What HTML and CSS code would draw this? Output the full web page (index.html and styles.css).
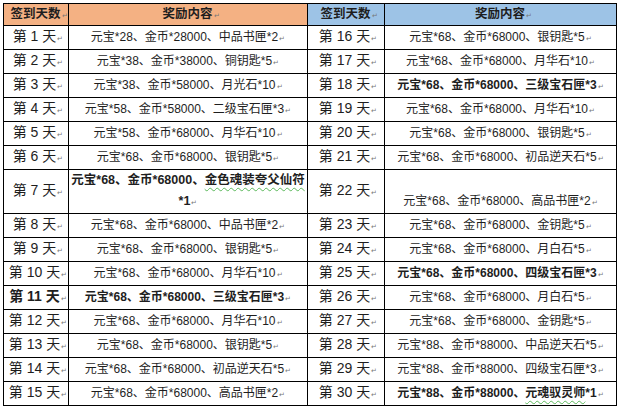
FILE: index.html
```html
<!DOCTYPE html>
<html lang="zh-CN">
<head>
<meta charset="utf-8">
<title>签到奖励</title>
<link rel="stylesheet" href="styles.css">
</head>
<body>
<table class="rewards">
  <colgroup>
    <col class="c-day">
    <col class="c-reward-l">
    <col class="c-day2">
    <col class="c-reward-r">
  </colgroup>
  <tr class="head">
    <th class="h-orange">签到天数<span class="pm">↵</span></th>
    <th class="h-orange">奖励内容<span class="pm">↵</span></th>
    <th class="h-blue">签到天数<span class="pm">↵</span></th>
    <th class="h-blue">奖励内容<span class="pm">↵</span></th>
  </tr>
  <tr>
    <td class="day">第 1 天<span class="pm">↵</span></td>
    <td>元宝*28、金币*28000、中品书匣*2<span class="pm">↵</span></td>
    <td class="day">第 16 天<span class="pm">↵</span></td>
    <td>元宝*68、金币*68000、银钥匙*5<span class="pm">↵</span></td>
  </tr>
  <tr>
    <td class="day">第 2 天<span class="pm">↵</span></td>
    <td>元宝*38、金币*38000、铜钥匙*5<span class="pm">↵</span></td>
    <td class="day">第 17 天<span class="pm">↵</span></td>
    <td>元宝*68、金币*68000、月华石*10<span class="pm">↵</span></td>
  </tr>
  <tr>
    <td class="day">第 3 天<span class="pm">↵</span></td>
    <td>元宝*38、金币*58000、月光石*10<span class="pm">↵</span></td>
    <td class="day">第 18 天<span class="pm">↵</span></td>
    <td class="b">元宝*68、金币*68000、三级宝石匣*3<span class="pm">↵</span></td>
  </tr>
  <tr>
    <td class="day">第 4 天<span class="pm">↵</span></td>
    <td>元宝*58、金币*58000、二级宝石匣*3<span class="pm">↵</span></td>
    <td class="day">第 19 天<span class="pm">↵</span></td>
    <td>元宝*68、金币*68000、月华石*10<span class="pm">↵</span></td>
  </tr>
  <tr>
    <td class="day">第 5 天<span class="pm">↵</span></td>
    <td>元宝*58、金币*68000、月华石*10<span class="pm">↵</span></td>
    <td class="day">第 20 天<span class="pm">↵</span></td>
    <td>元宝*68、金币*68000、银钥匙*5<span class="pm">↵</span></td>
  </tr>
  <tr>
    <td class="day">第 6 天<span class="pm">↵</span></td>
    <td>元宝*68、金币*68000、银钥匙*5<span class="pm">↵</span></td>
    <td class="day">第 21 天<span class="pm">↵</span></td>
    <td>元宝*68、金币*68000、初品逆天石*5<span class="pm">↵</span></td>
  </tr>
  <tr class="tall">
    <td class="day">第 7 天<span class="pm">↵</span></td>
    <td class="b wrap">元宝*68、金币*68000、<span class="wavy">金色魂装夸父仙符</span><br>*1<span class="pm">↵</span></td>
    <td class="day">第 22 天<span class="pm">↵</span></td>
    <td class="bottom">元宝*68、金币*68000、高品书匣*2<span class="pm">↵</span></td>
  </tr>
  <tr>
    <td class="day">第 8 天<span class="pm">↵</span></td>
    <td>元宝*68、金币*68000、中品书匣*2<span class="pm">↵</span></td>
    <td class="day">第 23 天<span class="pm">↵</span></td>
    <td>元宝*68、金币*68000、金钥匙*5<span class="pm">↵</span></td>
  </tr>
  <tr>
    <td class="day">第 9 天<span class="pm">↵</span></td>
    <td>元宝*68、金币*68000、银钥匙*5<span class="pm">↵</span></td>
    <td class="day">第 24 天<span class="pm">↵</span></td>
    <td>元宝*68、金币*68000、月白石*5<span class="pm">↵</span></td>
  </tr>
  <tr>
    <td class="day">第 10 天<span class="pm">↵</span></td>
    <td>元宝*68、金币*68000、月华石*10<span class="pm">↵</span></td>
    <td class="day">第 25 天<span class="pm">↵</span></td>
    <td class="b">元宝*68、金币*68000、四级宝石匣*3<span class="pm">↵</span></td>
  </tr>
  <tr>
    <td class="day b">第 11 天<span class="pm">↵</span></td>
    <td class="b">元宝*68、金币*68000、三级宝石匣*3<span class="pm">↵</span></td>
    <td class="day">第 26 天<span class="pm">↵</span></td>
    <td>元宝*68、金币*68000、月白石*5<span class="pm">↵</span></td>
  </tr>
  <tr>
    <td class="day">第 12 天<span class="pm">↵</span></td>
    <td>元宝*68、金币*68000、月华石*10<span class="pm">↵</span></td>
    <td class="day">第 27 天<span class="pm">↵</span></td>
    <td>元宝*68、金币*68000、金钥匙*5<span class="pm">↵</span></td>
  </tr>
  <tr>
    <td class="day">第 13 天<span class="pm">↵</span></td>
    <td>元宝*68、金币*68000、银钥匙*5<span class="pm">↵</span></td>
    <td class="day">第 28 天<span class="pm">↵</span></td>
    <td>元宝*88、金币*88000、中品逆天石*5<span class="pm">↵</span></td>
  </tr>
  <tr>
    <td class="day">第 14 天<span class="pm">↵</span></td>
    <td>元宝*68、金币*68000、初品逆天石*5<span class="pm">↵</span></td>
    <td class="day">第 29 天<span class="pm">↵</span></td>
    <td>元宝*88、金币*88000、四级宝石匣*3<span class="pm">↵</span></td>
  </tr>
  <tr>
    <td class="day">第 15 天<span class="pm">↵</span></td>
    <td>元宝*68、金币*68000、高品书匣*2<span class="pm">↵</span></td>
    <td class="day">第 30 天<span class="pm">↵</span></td>
    <td class="b">元宝*88、金币*88000、<span class="wavy">元魂驭灵师</span>*1<span class="pm">↵</span></td>
  </tr>
</table>
</body>
</html>
```

FILE: styles.css
```css
html, body {
  margin: 0;
  padding: 0;
  background: #ffffff;
}

body {
  padding: 3px;
  font-family: "Liberation Sans", "Noto Sans CJK SC", sans-serif;
  font-size: 12px;
  color: #1e1e1e;
}

.rewards {
  border-collapse: collapse;
  table-layout: fixed;
  width: 613px;
}

.c-day { width: 65px; }
.c-reward-l { width: 239px; }
.c-day2 { width: 77px; }
.c-reward-r { width: 232px; }

.rewards th,
.rewards td {
  border: 1px solid #000;
  padding: 0;
  text-align: center;
  vertical-align: middle;
  white-space: nowrap;
  line-height: 16px;
}

.rewards td {
  height: 23px;
}

.rewards th {
  height: 21px;
  font-weight: bold;
  font-size: 12.5px;
  padding-left: 6px;
}

.rewards td.day {
  font-size: 14px;
  padding-left: 4px;
}

.h-orange { background: #f4b183; }
.h-blue { background: #9dc3e6; }

.b { font-weight: bold; }

.tall td {
  height: 41px;
}

.rewards td.wrap {
  line-height: 21px;
  font-size: 12.5px;
}

.rewards td.bottom {
  vertical-align: bottom;
  padding-bottom: 2px;
}

.wavy {
  text-decoration: underline wavy #5cb85c;
  text-decoration-thickness: 1px;
  text-underline-offset: 3px;
}

.pm {
  font-size: 7px;
  font-weight: normal;
  color: #777;
  margin-left: 1px;
  vertical-align: baseline;
}
```
